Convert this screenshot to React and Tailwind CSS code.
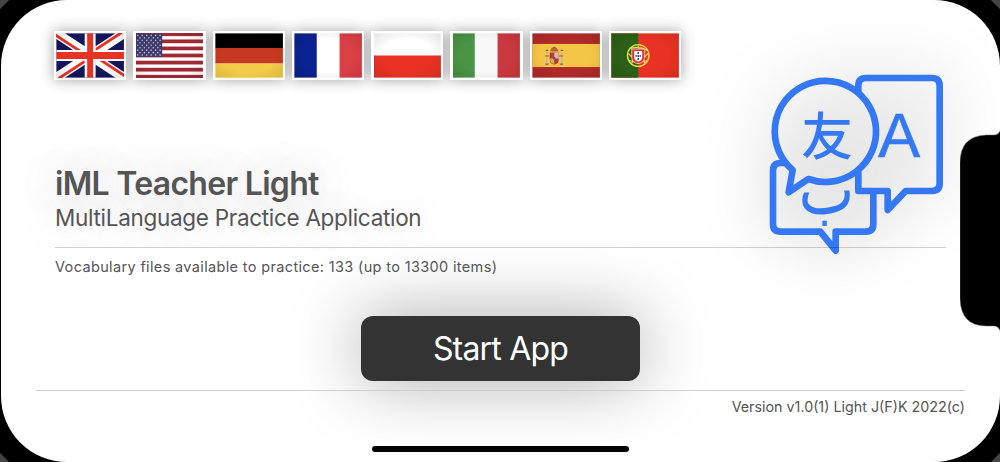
const Shade = () => (
    <>
        <defs>
            <radialGradient id="shade" cx="50%" cy="50%" r="75%">
                <stop offset="0.5" stopColor="#000" stopOpacity="0" />
                <stop offset="1" stopColor="#000" stopOpacity="0.12" />
            </radialGradient>
        </defs>
        <rect width="68" height="44" fill="url(#shade)" />
    </>
);

const stripes = [0, 1, 2, 3, 4, 5, 6];
const starRows = [0, 1, 2, 3, 4, 5, 6, 7, 8];

const flags = [
    {
        name: "English UK",
        art: <>
            <rect width="68" height="44" fill="#15155c" />
            <path d="M0 0L68 44M68 0L0 44" stroke="#fff" strokeWidth="9.5" />
            <path d="M-2 1L32 23M70 43L36 21M66 -1L32 21M2 45L36 23" stroke="#e83223" strokeWidth="2.8" />
            <path d="M34 0V44M0 22H68" stroke="#fff" strokeWidth="11" />
            <path d="M34 0V44" stroke="#e83223" strokeWidth="6" />
            <path d="M0 22H68" stroke="#e83223" strokeWidth="7" />
        </>
    },
    {
        name: "English US",
        art: <>
            <rect width="68" height="44" fill="#fff" />
            {stripes.map(i => <rect key={i} y={i * 7.05 - 1} width="68" height="3.7" fill="#a02a34" />)}
            <rect width="27" height="23.5" fill="#3c3b6d" />
            {starRows.map(row => (
                stripes.slice(0, row % 2 ? 5 : 6).map(col => (
                    <circle key={row + "-" + col} cx={2.4 + col * 4.5 + (row % 2 ? 2.2 : 0)} cy={2 + row * 2.45} r="0.8" fill="#c0c0d0" />
                ))
            ))}
        </>
    },
    {
        name: "Deutsch",
        art: <>
            <rect width="68" height="15" fill="#000" />
            <rect y="14.5" width="68" height="15.5" fill="#c93820" />
            <rect y="30" width="68" height="14" fill="#f3cc47" />
        </>
    },
    {
        name: "Français",
        art: <>
            <rect width="68" height="44" fill="#fff" />
            <rect width="22.5" height="44" fill="#0b2391" />
            <rect x="45.5" width="22.5" height="44" fill="#db4046" />
        </>
    },
    {
        name: "Polski",
        art: <>
            <rect width="68" height="44" fill="#fff" />
            <rect y="22" width="68" height="22" fill="#e83223" />
        </>
    },
    {
        name: "Italiano",
        art: <>
            <rect width="68" height="44" fill="#f8f8f8" />
            <rect width="22.5" height="44" fill="#499445" />
            <rect x="45.5" width="22.5" height="44" fill="#ca393f" />
        </>
    },
    {
        name: "Español",
        art: <>
            <rect width="68" height="44" fill="#b12a2a" />
            <rect y="10.5" width="68" height="23" fill="#f4c645" />
            <path d="M14.5 18V30M29.5 18V30" stroke="#c9b9a0" strokeWidth="1.6" />
            <path d="M13 22.5H17M27 22.5H31M13.5 17H16M28.5 17H31" stroke="#b5473a" strokeWidth="1.2" />
            <path d="M13 30.5H16.5M27.5 30.5H31" stroke="#5c6793" strokeWidth="1.2" />
            <path d="M18 18Q18 14 22 13.5Q26 14 26 18Z" fill="#b5652e" />
            <path d="M17.5 19H26.5V26Q26.5 30.5 22 31Q17.5 30.5 17.5 26Z" fill="#b63a2f" />
            <path d="M22 19H26.5V25H22Z" fill="#d8b7aa" />
            <path d="M17.5 25H22V30.5Q18 30 17.5 25Z" fill="#e0aa3e" />
            <circle cx="22" cy="25" r="1.4" fill="#4d5fa5" />
            <circle cx="22" cy="14" r="1" fill="#7f667d" />
        </>
    },
    {
        name: "Português",
        art: <>
            <rect width="68" height="44" fill="#e83223" />
            <rect width="27" height="44" fill="#2c6017" />
            <circle cx="27" cy="22" r="10.8" fill="none" stroke="#e2df45" strokeWidth="1.4" />
            <path d="M17 20Q26 31 36 27M18 27Q27 31 37 20M19 15Q28 12 36 17M20 30L24 25M34 30L31 25M27 12V15" fill="none" stroke="#e2df45" strokeWidth="1.2" />
            <path d="M20.5 15.5H33.5V24Q33 29.5 27 30Q21 29.5 20.5 24Z" fill="#e83223" stroke="#f3e9dc" strokeWidth="0.8" />
            <path d="M23 17.5H31V24Q30.5 27.5 27 28Q23.5 27.5 23 24Z" fill="#fff" />
            <path d="M27 18.5V20.5M27 21.5V23.5M27 24.5V26.5M24.2 22.5H25.8M28.2 22.5H29.8" stroke="#2f4cad" strokeWidth="1.6" />
        </>
    },
];

const LanguagesIcon = () => (
    <svg
        viewBox="0 0 630 630"
        className="w-[210px] h-[210px] shrink-0 overflow-visible [filter:drop-shadow(0_0_32px_rgba(0,0,0,0.33))]"
        fill="none"
        stroke="#3478f6"
        strokeWidth="20"
        strokeLinejoin="round"
        strokeLinecap="butt"
    >
        <path d="M325 104V77Q325 54 348 54H546Q569 54 569 77V370Q569 393 546 393H467L413 450V393H325V334" />
        <path d="M106 309H92Q69 309 69 332V492Q69 515 92 515H211L257 572V515H347Q370 515 370 492V398" />
        <path d="M128 330A152 151.500 0 1 1 175 357L116 397Z" />
        <g fill="#3478f6" stroke="none">
            <text x="154" y="284" fontSize="155" fontWeight="500" fontFamily="'Noto Sans CJK SC', sans-serif">友</text>
            <text x="447" y="291" fontSize="190" textAnchor="middle" fontFamily="'Liberation Sans', sans-serif" stroke="#3478f6" strokeWidth="1.5">A</text>
            <text transform="translate(229 463) scale(1 1.2)" fontSize="178" textAnchor="middle" fontFamily="'DejaVu Sans', sans-serif">ب</text>
        </g>
    </svg>
);

const App = () => {
    return (
        <div className="relative w-full h-[462px] overflow-hidden bg-[linear-gradient(45deg,#444_6px,transparent_7px,transparent_calc(100%-7px),#444_calc(100%-6px)),linear-gradient(135deg,#444_6px,#000_7px,#000_calc(100%-7px),#444_calc(100%-6px))] font-['Inter',sans-serif] text-[#555]">
            <div className="ml-px h-full bg-white rounded-[66px] overflow-hidden flex flex-col">
                <div className="flex justify-between pl-[53px] pr-[40px]">
                    <div>
                        <div className="flex gap-[7px] mt-[31px] w-fit [filter:drop-shadow(0_0_7px_rgba(0,0,0,0.36))]">
                            {flags.map(flag => (
                                <svg key={flag.name} viewBox="0 0 68 44" preserveAspectRatio="none" className="w-[72.3px] h-[49px] p-[2.4px] bg-white">
                                    {flag.art}
                                    <Shade />
                                </svg>
                            ))}
                        </div>
                        <div className="pl-[1px] mt-[84px] [text-shadow:0_0_48px_rgba(0,0,0,0.25)]">
                            <h1 className="text-[32px] leading-[40px] font-semibold tracking-[-0.7px] whitespace-nowrap">iML Teacher Light</h1>
                            <p className="text-[22.5px] leading-[28px] tracking-[-0.3px] whitespace-nowrap">MultiLanguage Practice Application</p>
                        </div>
                    </div>
                    <div className="mt-[60px] h-[187px]">
                        <LanguagesIcon />
                    </div>
                </div>
                <div className="relative ml-[54px] mr-[54px] border-t border-black/18 pt-[9px]">
                    <p className="text-[14.5px] leading-[20px] tracking-[0.35px]">Vocabulary files available to practice: 133 (up to 13300 items)</p>
                </div>
                <div className="mt-[39px] flex justify-center">
                    <button className="w-[279px] h-[65px] rounded-[12px] bg-[#333] text-white text-[32px] tracking-[-0.8px] shadow-[0_0_70px_rgba(0,0,0,0.34)]">Start App</button>
                </div>
                <div className="relative mt-[9px] ml-[35px] mr-[35px] border-t border-[#cfcfcf] pt-[6px] text-right">
                    <p className="text-[14.3px] leading-[20px]">Version v1.0(1) Light J(F)K 2022(c)</p>
                </div>
                <div className="relative mt-[29px] self-center w-[257px] h-[6px] rounded-full bg-black"></div>
            </div>
            <svg viewBox="0 0 40 208" className="absolute right-0 top-[127px] w-[40px] h-[208px]">
                <path d="M41 0Q40 8 34 8H26Q0 9 0 36V172Q1 199 26 199H34Q40 199 41 208Z" fill="#000" stroke="#777" strokeWidth="0.5" />
            </svg>
        </div>
    )
}

export default App;
